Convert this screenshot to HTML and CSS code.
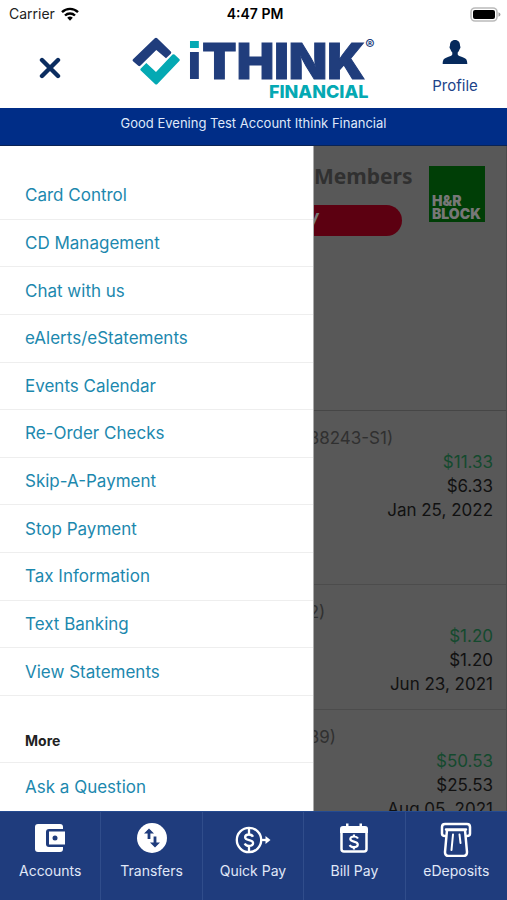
FILE: index.html
```html
<!DOCTYPE html>
<html lang="en">
<head>
<meta charset="utf-8">
<meta name="viewport" content="width=device-width, initial-scale=1">
<title>iTHINK Financial</title>
<link rel="stylesheet" href="styles.css">
</head>
<body>
<div class="status">
  <div class="carrier">Carrier
    <svg width="18" height="14" viewBox="0 0 18 14" fill="none" stroke="#000" stroke-width="2.4"><path d="M1 5.2a11.4 11.4 0 0 1 16 0M4 8.5a7.2 7.2 0 0 1 10 0"/><path d="M6.2 10.8a4 4 0 0 1 5.6 0L9 13.7z" fill="#000" stroke="none"/></svg>
  </div>
  <div class="time">4:47 PM</div>
  <svg class="battery" width="31" height="15" viewBox="0 0 31 15"><rect x="1" y="1" width="26" height="13" rx="4" fill="#fff" stroke="#bbb" stroke-width="1.6"/><rect x="3" y="3" width="22" height="9" rx="2" fill="#000"/><path d="M28.5 5.3v4.4q2-.7 2-2.2t-2-2.2z" fill="#999"/></svg>
</div>
<header class="header">
  <button class="close" type="button" aria-label="Close menu">
    <svg width="22" height="22" viewBox="0 0 22 22" stroke="#0b2d60" stroke-width="4.4" stroke-linecap="round"><path d="M3 3l16 16M19 3L3 19"/></svg>
  </button>
  <div class="logo">
    <svg width="48" height="48" viewBox="0 0 48 48"><path d="M22.800 1.200q1.200-1 2.400 0L38.800 14.500q1 1.100 0 2.200L34 21.200 24.300 12.900 8.300 28.800q-1 .9-2 0L1 24.200q-1-1 0-2z" fill="#203d7c"/><path d="M40.500 17.600q1-.8 2 0l4.800 4.500q1 1 0 2L25.400 47q-1.200 1-2.400 0L8.800 33.400q-1-1 0-2l5.500-5.400 9.700 9z" fill="#04a9b3"/></svg>
    <div class="wordmark">
      <div class="name"><span class="dotted">i</span>THINK<sup>®</sup></div>
      <div class="sub">FINANCIAL</div>
    </div>
  </div>
  <a class="profile" href="#profile">
    <svg width="26" height="26" viewBox="0 0 26 26" fill="#062a5c"><path d="M13 1c-3.300 0-5 2.300-5 5.200 0 1-.7 1.300-.4 2.500.2 1 .8 1.200 1 2 .3 1.200.9 2 1.700 2.700v2.200c-.2 1.100-2.300 1.700-5 2.600C2 19.300.7 20.500.7 25h24.600c0-4.500-1.300-5.700-4.600-6.800-2.700-.9-4.800-1.500-5-2.600v-2.200c.8-.7 1.400-1.500 1.700-2.700.2-.8.800-1 1-2 .3-1.200-.4-1.500-.4-2.500C18 3.300 16.300 1 13 1z"/></svg>
    Profile
  </a>
</header>
<div class="greeting">Good Evening Test Account Ithink Financial</div>
<main class="main">
  <div class="page">
    <div class="banner">
      <div class="promo">
        <div class="headline">Members</div>
        <div class="pill">W</div>
      </div>
      <div class="block">H&amp;R<br>BLOCK</div>
    </div>
    <section class="account first">
      <div class="number">38243-S1)</div>
      <div class="available">$11.33</div>
      <div>$6.33</div>
      <div>Jan 25, 2022</div>
    </section>
    <section class="account">
      <div class="number">2)</div>
      <div class="available">$1.20</div>
      <div>$1.20</div>
      <div>Jun 23, 2021</div>
    </section>
    <section class="account">
      <div class="number">39)</div>
      <div class="available">$50.53</div>
      <div>$25.53</div>
      <div>Aug 05, 2021</div>
    </section>
  </div>
  <nav class="drawer" aria-label="Menu">
    <ul class="menu">
      <li><a href="#card">Card Control</a></li>
      <li><a href="#cd">CD Management</a></li>
      <li><a href="#chat">Chat with us</a></li>
      <li><a href="#ealerts">eAlerts/eStatements</a></li>
      <li><a href="#events">Events Calendar</a></li>
      <li><a href="#checks">Re-Order Checks</a></li>
      <li><a href="#skip">Skip-A-Payment</a></li>
      <li><a href="#stop">Stop Payment</a></li>
      <li><a href="#tax">Tax Information</a></li>
      <li><a href="#text">Text Banking</a></li>
      <li><a href="#statements">View Statements</a></li>
    </ul>
    <h2>More</h2>
    <a class="ask" href="#ask">Ask a Question</a>
  </nav>
</main>
<nav class="tabs" aria-label="Main">
  <a href="#accounts">
    <svg width="36" height="36" viewBox="0 0 36 36"><path d="M6 3h22q3 0 3 3v22q0 3-3 3H6q-3 0-3-3V6q0-3 3-3z" fill="#fff"/><path d="M17 8h18v18H17q-3 0-3-3V11q0-3 3-3z" fill="#1f3c7d"/><path d="M17 10.500h16v13H17z" fill="#fff"/><circle cx="23" cy="17" r="2.500" fill="#1f3c7d"/></svg>
    Accounts</a>
  <a href="#transfers">
    <svg width="36" height="36" viewBox="0 0 36 36"><circle cx="18" cy="17" r="15" fill="#fff"/><g fill="none" stroke="#1f3c7d" stroke-width="2.800"><path d="M15 18V9M21 15.500V24"/></g><path d="M10 12.500L15 7.500l5 5zM16 21.500l5 5 5-5z" fill="#1f3c7d"/></svg>
    Transfers</a>
  <a href="#quickpay">
    <svg width="36" height="36" viewBox="0 0 36 36" fill="none" stroke="#fff" stroke-width="2.300"><circle cx="14" cy="19" r="12.200"/><path d="M26 19h7.500"/><path d="M30.500 15l5 4-5 4z" fill="#fff" stroke="none"/><path d="M18 15.800c-.8-1.800-2-2.300-4-2.300-2.400 0-3.900 1-3.900 2.700 0 3.900 8 1.800 8 5.800 0 1.900-1.600 2.900-4.100 2.900-2.200 0-3.600-.7-4.300-2.400M14 7v6.500M14 25v6"/></svg>
    Quick Pay</a>
  <a href="#billpay">
    <svg width="36" height="36" viewBox="0 0 36 36" fill="none" stroke="#fff"><path d="M5.500 11V28q0 2.500 2.500 2.500h20q2.500 0 2.500-2.500V11" stroke-width="2.500"/><path d="M7 5h3V2.500h2.500V5h11V2.500H26V5h3q3 0 3 3v4H4V8q0-3 3-3z" fill="#fff" stroke="none"/><path d="M22 17.500c-.8-1.500-2-2-4-2-2.300 0-3.700.9-3.700 2.500 0 3.500 7.500 1.800 7.500 5.500 0 1.800-1.500 2.700-3.900 2.700-2.200 0-3.500-.7-4.200-2.200M18 13.500V16M18 26v2.500" stroke-width="2.200"/></svg>
    Bill Pay</a>
  <a href="#edeposits">
    <svg width="36" height="36" viewBox="0 0 36 36" fill="none" stroke="#fff" stroke-width="2.500" stroke-linecap="round" stroke-linejoin="round"><path d="M7.500 15H7Q4 15 4 12.500V6q0-3 3-3h22q3 0 3 3v6.500Q32 15 29 15h-.5"/><path d="M8 8.500h20M9 9L7 31q0 4 3.500 4h15q3.500 0 3.500-4L27 9z"/><path d="M15 13.500l-1.500 15.500M21.500 13.500l1 8.500" stroke-width="2"/></svg>
    eDeposits</a>
</nav>
</body>
</html>
```
FILE: styles.css
```css
* { box-sizing: border-box; }
body {
  margin: 0;
  height: 100vh;
  display: flex;
  flex-direction: column;
  overflow: hidden;
  background: #fff;
  color: #111;
  font: 16px/24px Inter, "Liberation Sans", sans-serif;
}
a { text-decoration: none; color: inherit; }
svg { display: block; flex: none; }

.status {
  display: grid;
  grid-template-columns: 1fr auto 1fr;
  align-items: center;
  height: 28px;
  padding: 0 6px 0 9px;
  font-size: 14px;
  color: #222;
}
.carrier { display: flex; align-items: center; gap: 6px; }
.time { font-weight: 600; color: #000; }
.battery { justify-self: end; }

.header {
  display: grid;
  grid-template-columns: 100px 1fr 104px;
  height: 80px;
}
.close {
  display: flex;
  align-items: center;
  justify-content: center;
  padding: 0;
  border: 0;
  background: none;
}
.logo { display: flex; justify-content: center; gap: 6px; padding: 9px 0 0 4px; }
.name {
  display: flex;
  font-size: 50px;
  line-height: 48px;
  font-weight: 900;
  color: #203d7c;
  -webkit-text-stroke: 1px #203d7c;
}
.dotted {
  padding: 0 1px;
  font-family: "Liberation Sans", sans-serif;
  color: transparent;
  -webkit-text-stroke: 2px transparent;
  background: linear-gradient(#04a9b3 12px, #fff 12px, #fff 15px, #203d7c 15px);
  background-clip: text;
  -webkit-background-clip: text;
}
sup { font-size: 14px; line-height: 16px; font-weight: 600; -webkit-text-stroke: 0; }
.sub {
  padding-right: 6px;
  text-align: right;
  font-size: 18px;
  line-height: 14px;
  font-weight: 800;
  color: #04a9b3;
}
.profile {
  display: flex;
  flex-direction: column;
  align-items: center;
  gap: 9px;
  padding-top: 11px;
  font-size: 15px;
  color: #204389;
}
.greeting {
  height: 38px;
  padding-top: 3px;
  border-bottom: 1px solid #0a2354;
  background: #002d87;
  color: #dfe8fa;
  text-align: center;
  font-size: 13px;
}

.main { position: relative; flex: 1; min-height: 0; overflow: hidden; background: #585858; }
.page { border-right: 1px solid #4a4a4a; }
.banner {
  display: flex;
  align-items: flex-start;
  justify-content: space-between;
  height: 265px;
  padding: 20px 21px 0 0;
  border-bottom: 1px solid #464646;
}
.promo { width: 402px; }
.headline {
  padding-left: 314px;
  font: bold 21px/20px "Noto Sans", sans-serif;
  color: #303030;
}
.pill {
  height: 31px;
  margin-top: 19px;
  padding-right: 84px;
  border-radius: 0 16px 16px 0;
  background: #5c0011;
  color: #777;
  text-align: right;
  font: italic bold 20px/31px "Liberation Sans", sans-serif;
}
.block {
  width: 56px;
  height: 56px;
  padding: 28px 0 0 3px;
  background: #003e06;
  color: #777;
  font-size: 14px;
  line-height: 13px;
  font-weight: 900;
}
.account {
  height: 125px;
  padding: 15px 13px 0 61%;
  border-bottom: 1px solid #4c4c4c;
  text-align: right;
  font-size: 17px;
}
.account.first { height: 174px; }
.number { text-align: left; color: #303030; }
.available { color: #144a2e; }

.drawer {
  position: absolute;
  top: 0;
  bottom: 0;
  left: 0;
  width: 62%;
  padding-top: 26px;
  border-right: 1px solid #aaa;
  background: #fff;
  color: #1c88ae;
  font-size: 17px;
}
.menu {
  display: grid;
  grid-auto-rows: 1fr;
  min-height: 524px;
  margin: 0;
  padding: 0;
  list-style: none;
}
.menu li { display: flex; border-bottom: 1px solid #eee; }
.menu a { flex: 1; align-self: center; padding-left: 25px; }
.drawer h2 {
  margin: 0;
  padding: 33px 25px 9px;
  border-bottom: 1px solid #eee;
  font-size: 14px;
  line-height: 24px;
  font-weight: 700;
  color: #222;
}
.ask { display: block; padding: 12px 25px; }

.tabs {
  display: grid;
  grid-template-columns: repeat(5, 1fr);
  height: 89px;
  background: #1f3c7d;
  border-top: 1px solid #254b91;
}
.tabs a {
  display: flex;
  flex-direction: column;
  align-items: center;
  gap: 2px;
  padding-top: 9px;
  border-right: 1px solid #304d8b;
  color: #e0e8f8;
  font-size: 14px;
}
.tabs a:last-child { border-right: 0; }
```
